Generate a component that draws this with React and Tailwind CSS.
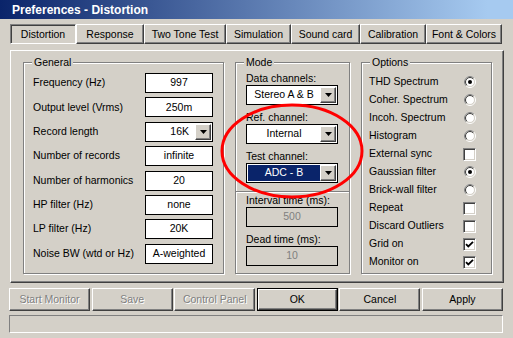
import React from 'react';

const raised =
  'border border-t-white border-l-white border-r-[#404040] border-b-[#404040] shadow-[inset_-1px_-1px_0_#808080]';
const pressed =
  'border border-t-[#808080] border-l-[#808080] border-r-white border-b-white shadow-[inset_1px_1px_0_#404040]';
const etched = 'border border-[#808080] shadow-[inset_1px_1px_0_#fff,1px_1px_0_#fff]';
const sunken =
  'border border-t-[#808080] border-l-[#808080] border-r-white border-b-white shadow-[inset_1px_1px_0_#404040,inset_-1px_-1px_0_#d4d0c8]';

const tabs = [
  { label: 'Distortion', w: 'w-[66px]', active: true },
  { label: 'Response', w: 'w-[68px]' },
  { label: 'Two Tone Test', w: 'w-[82px]' },
  { label: 'Simulation', w: 'w-[65px]' },
  { label: 'Sound card', w: 'w-[69px]' },
  { label: 'Calibration', w: 'w-[66px]' },
  { label: 'Font & Colors', w: 'w-[76px]' },
];

const general = [
  ['Frequency (Hz)', '997'],
  ['Output level (Vrms)', '250m'],
  ['Record length', '16K', true],
  ['Number of records', 'infinite'],
  ['Number of harmonics', '20'],
  ['HP filter (Hz)', 'none'],
  ['LP filter (Hz)', '20K'],
  ['Noise BW (wtd or Hz)', 'A-weighted'],
];

const options = [
  ['THD Spectrum', 'radio', true],
  ['Coher. Spectrum', 'radio'],
  ['Incoh. Spectrum', 'radio'],
  ['Histogram', 'radio'],
  ['External sync', 'check'],
  ['Gaussian filter', 'radio', true],
  ['Brick-wall filter', 'radio'],
  ['Repeat', 'check'],
  ['Discard Outliers', 'check'],
  ['Grid on', 'check', true],
  ['Monitor on', 'check', true],
];

const buttons = [
  { label: 'Start Monitor', disabled: true },
  { label: 'Save', disabled: true },
  { label: 'Control Panel', disabled: true },
  { label: 'OK', def: true },
  { label: 'Cancel' },
  { label: 'Apply' },
];

function Arrow() {
  return (
    <div className={`w-[16px] h-[16px] shrink-0 bg-[#d4d0c8] flex items-center justify-center ${raised}`}>
      <svg width="7" height="4" viewBox="0 0 7 4">
        <path d="M0 0h7L3.5 4z" fill="#000" />
      </svg>
    </div>
  );
}

function Combo({ value, className, textClass = 'justify-center', selected }) {
  return (
    <div className={`flex h-[20px] border border-black bg-white p-[1px] ${className}`}>
      <div
        className={`flex-1 flex items-center ${textClass} ${selected ? 'bg-[#0a246a] text-white' : ''}`}
      >
        {value}
      </div>
      <Arrow />
    </div>
  );
}

function Group({ title, className, children }) {
  return (
    <div className={`relative ${etched} ${className}`}>
      <span className="absolute -top-[7px] left-[8px] px-[2px] bg-[#d4d0c8] leading-[13px]">{title}</span>
      {children}
    </div>
  );
}

function Radio({ on }) {
  return (
    <svg width="12" height="12" viewBox="0 0 12 12">
      <circle cx="6" cy="6" r="5.5" fill="none" stroke="#fff" />
      <path d="M2.1 9.9A5.5 5.5 0 0 1 9.9 2.1" fill="none" stroke="#808080" />
      <circle cx="6" cy="6" r="4.5" fill="#fff" stroke="#d4d0c8" />
      <path d="M2.8 9.2A4.5 4.5 0 0 1 9.2 2.8" fill="none" stroke="#404040" />
      {on && <circle cx="6" cy="6" r="2" fill="#000" />}
    </svg>
  );
}

function Check({ on }) {
  return (
    <div className={`w-[13px] h-[13px] bg-white flex items-center justify-center ${sunken}`}>
      {on && (
        <svg width="9" height="9" viewBox="0 0 9 9">
          <path d="M1 4.2L3.3 6.5L8 1.8" fill="none" stroke="#000" strokeWidth="1.8" />
        </svg>
      )}
    </div>
  );
}

export default function App() {
  return (
    <div className="relative w-[513px] h-[338px] overflow-hidden bg-[#d4d0c8] text-black text-[10.5px] font-['Liberation_Sans',Arial,sans-serif]">
      {/* caption */}
      <div className="h-[19px] pt-[2px] pl-[12px] leading-[17px] text-[12px] font-bold text-white bg-[linear-gradient(90deg,#0a246a_0%,#a6caf0_95%)]">
        Preferences - Distortion
      </div>

      {/* tab buttons */}
      <div className="mt-[5px] ml-[10px] flex h-[20px]">
        {tabs.map((t) => (
          <div
            key={t.label}
            className={`${t.w} h-[20px] leading-[18px] text-center ${t.active ? pressed : raised}`}
          >
            {t.label}
          </div>
        ))}
      </div>

      {/* page */}
      <div
        className={`mt-[6px] ml-[10px] w-[494px] h-[233px] pt-[11px] pl-[12px] flex gap-[11px] ${raised}`}
      >
        <Group title="General" className="w-[201px] h-[212px] pt-[10px] pl-[9px] pr-[10px]">
          <div className="flex flex-col gap-[4.4px]">
            {general.map(([label, value, combo]) => (
              <div key={label} className="flex items-center justify-between h-[20px]">
                <span>{label}</span>
                {combo ? (
                  <Combo value={value} className="w-[68px]" textClass="justify-end pr-[6px]" />
                ) : (
                  <div className="w-[68px] h-[20px] border border-black bg-white flex items-center justify-center">
                    {value}
                  </div>
                )}
              </div>
            ))}
          </div>
        </Group>

        <Group title="Mode" className="w-[115px] h-[212px] pt-[9px]">
          <div className="px-[10px] flex flex-col">
            <span className="leading-[13px]">Data channels:</span>
            <Combo value="Stereo A & B" className="w-[92px]" />
            <span className="mt-[6px] leading-[13px]">Ref. channel:</span>
            <Combo value="Internal" className="w-[92px]" />
            <span className="mt-[6px] leading-[13px]">Test channel:</span>
            <Combo value="ADC - B" className="w-[92px]" selected />
          </div>
          <div className="mt-[8px] h-[2px] border-t border-t-[#808080] border-b border-b-white" />
          <div className="px-[10px] flex flex-col">
            <span className="mt-[1px] leading-[13px]">Interval time (ms):</span>
            <div className="w-[92px] h-[20px] border border-black flex items-center justify-center text-[#808080]">
              500
            </div>
            <span className="mt-[6px] leading-[13px]">Dead time (ms):</span>
            <div className="w-[92px] h-[20px] border border-black flex items-center justify-center text-[#808080]">
              10
            </div>
          </div>
        </Group>

        <Group title="Options" className="w-[131px] h-[212px] pt-[10px] pl-[7px]">
          <div className="flex flex-col">
            {options.map(([label, kind, on]) => (
              <div key={label} className="flex items-center h-[18px]">
                <span className="w-[94px]">{label}</span>
                <div className="w-[13px] flex justify-center">
                  {kind === 'radio' ? <Radio on={on} /> : <Check on={on} />}
                </div>
              </div>
            ))}
          </div>
        </Group>
      </div>

      {/* command buttons */}
      <div className="mt-[5px] ml-[9px] w-[494px] flex justify-between">
        {buttons.map((b) =>
          b.def ? (
            <div key={b.label} className="w-[81px] h-[23px] border border-black">
              <div className={`h-full flex items-center justify-center ${raised}`}>{b.label}</div>
            </div>
          ) : (
            <div
              key={b.label}
              className={`w-[81px] h-[23px] flex items-center justify-center ${raised} ${
                b.disabled ? 'text-[#808080] [text-shadow:1px_1px_0_#fff]' : ''
              }`}
            >
              {b.label}
            </div>
          )
        )}
      </div>

      {/* status bar */}
      <div className="mt-[4px] ml-[9px] w-[494px] h-[18px] border border-t-[#808080] border-l-[#808080] border-r-white border-b-white" />

      {/* red annotation ring */}
      <svg className="absolute left-0 top-0 pointer-events-none" width="513" height="338">
        <ellipse cx="292" cy="151" rx="70" ry="46" fill="none" stroke="#ff0000" strokeWidth="3" />
      </svg>
    </div>
  );
}
